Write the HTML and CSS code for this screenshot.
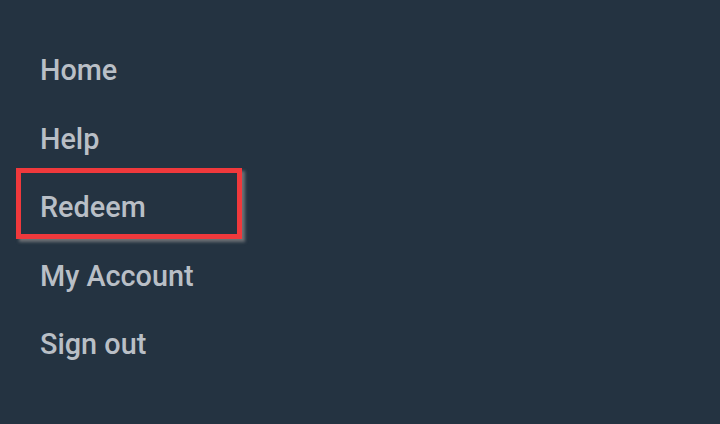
FILE: index.html
```html
<!DOCTYPE html>
<html lang="en">
<head>
    <meta charset="UTF-8">
    <meta name="viewport" content="width=device-width, initial-scale=1.0">
    <title>Menu</title>
    <link rel="stylesheet" href="styles.css">
</head>
<body>
    <nav class="menu">
        <ul class="menu-list">
            <li class="menu-item">Home</li>
            <li class="menu-item">Help</li>
            <li class="menu-item highlighted">Redeem</li>
            <li class="menu-item">My Account</li>
            <li class="menu-item">Sign out</li>
        </ul>
    </nav>
</body>
</html>
```

FILE: styles.css
```css
body {
    margin: 0;
    height: 100vh;
    background-color: #243341;
    font-family: 'Roboto', 'Liberation Sans', sans-serif;
    overflow: hidden;
}
.menu-list {
    list-style: none;
    margin: 0;
    padding: 36px 0 0 40px;
}
.menu-item {
    position: relative;
    font-size: 28.8px;
    font-weight: 500;
    line-height: 68.5px;
    color: #b9bfc6;
}
.highlighted::after {
    content: '';
    position: absolute;
    left: -24px;
    top: -5px;
    width: 216px;
    height: 61px;
    border: 5px solid #f0393c;
    box-shadow: 3px 3px 3px rgba(140, 140, 140, 0.7);
}
```
